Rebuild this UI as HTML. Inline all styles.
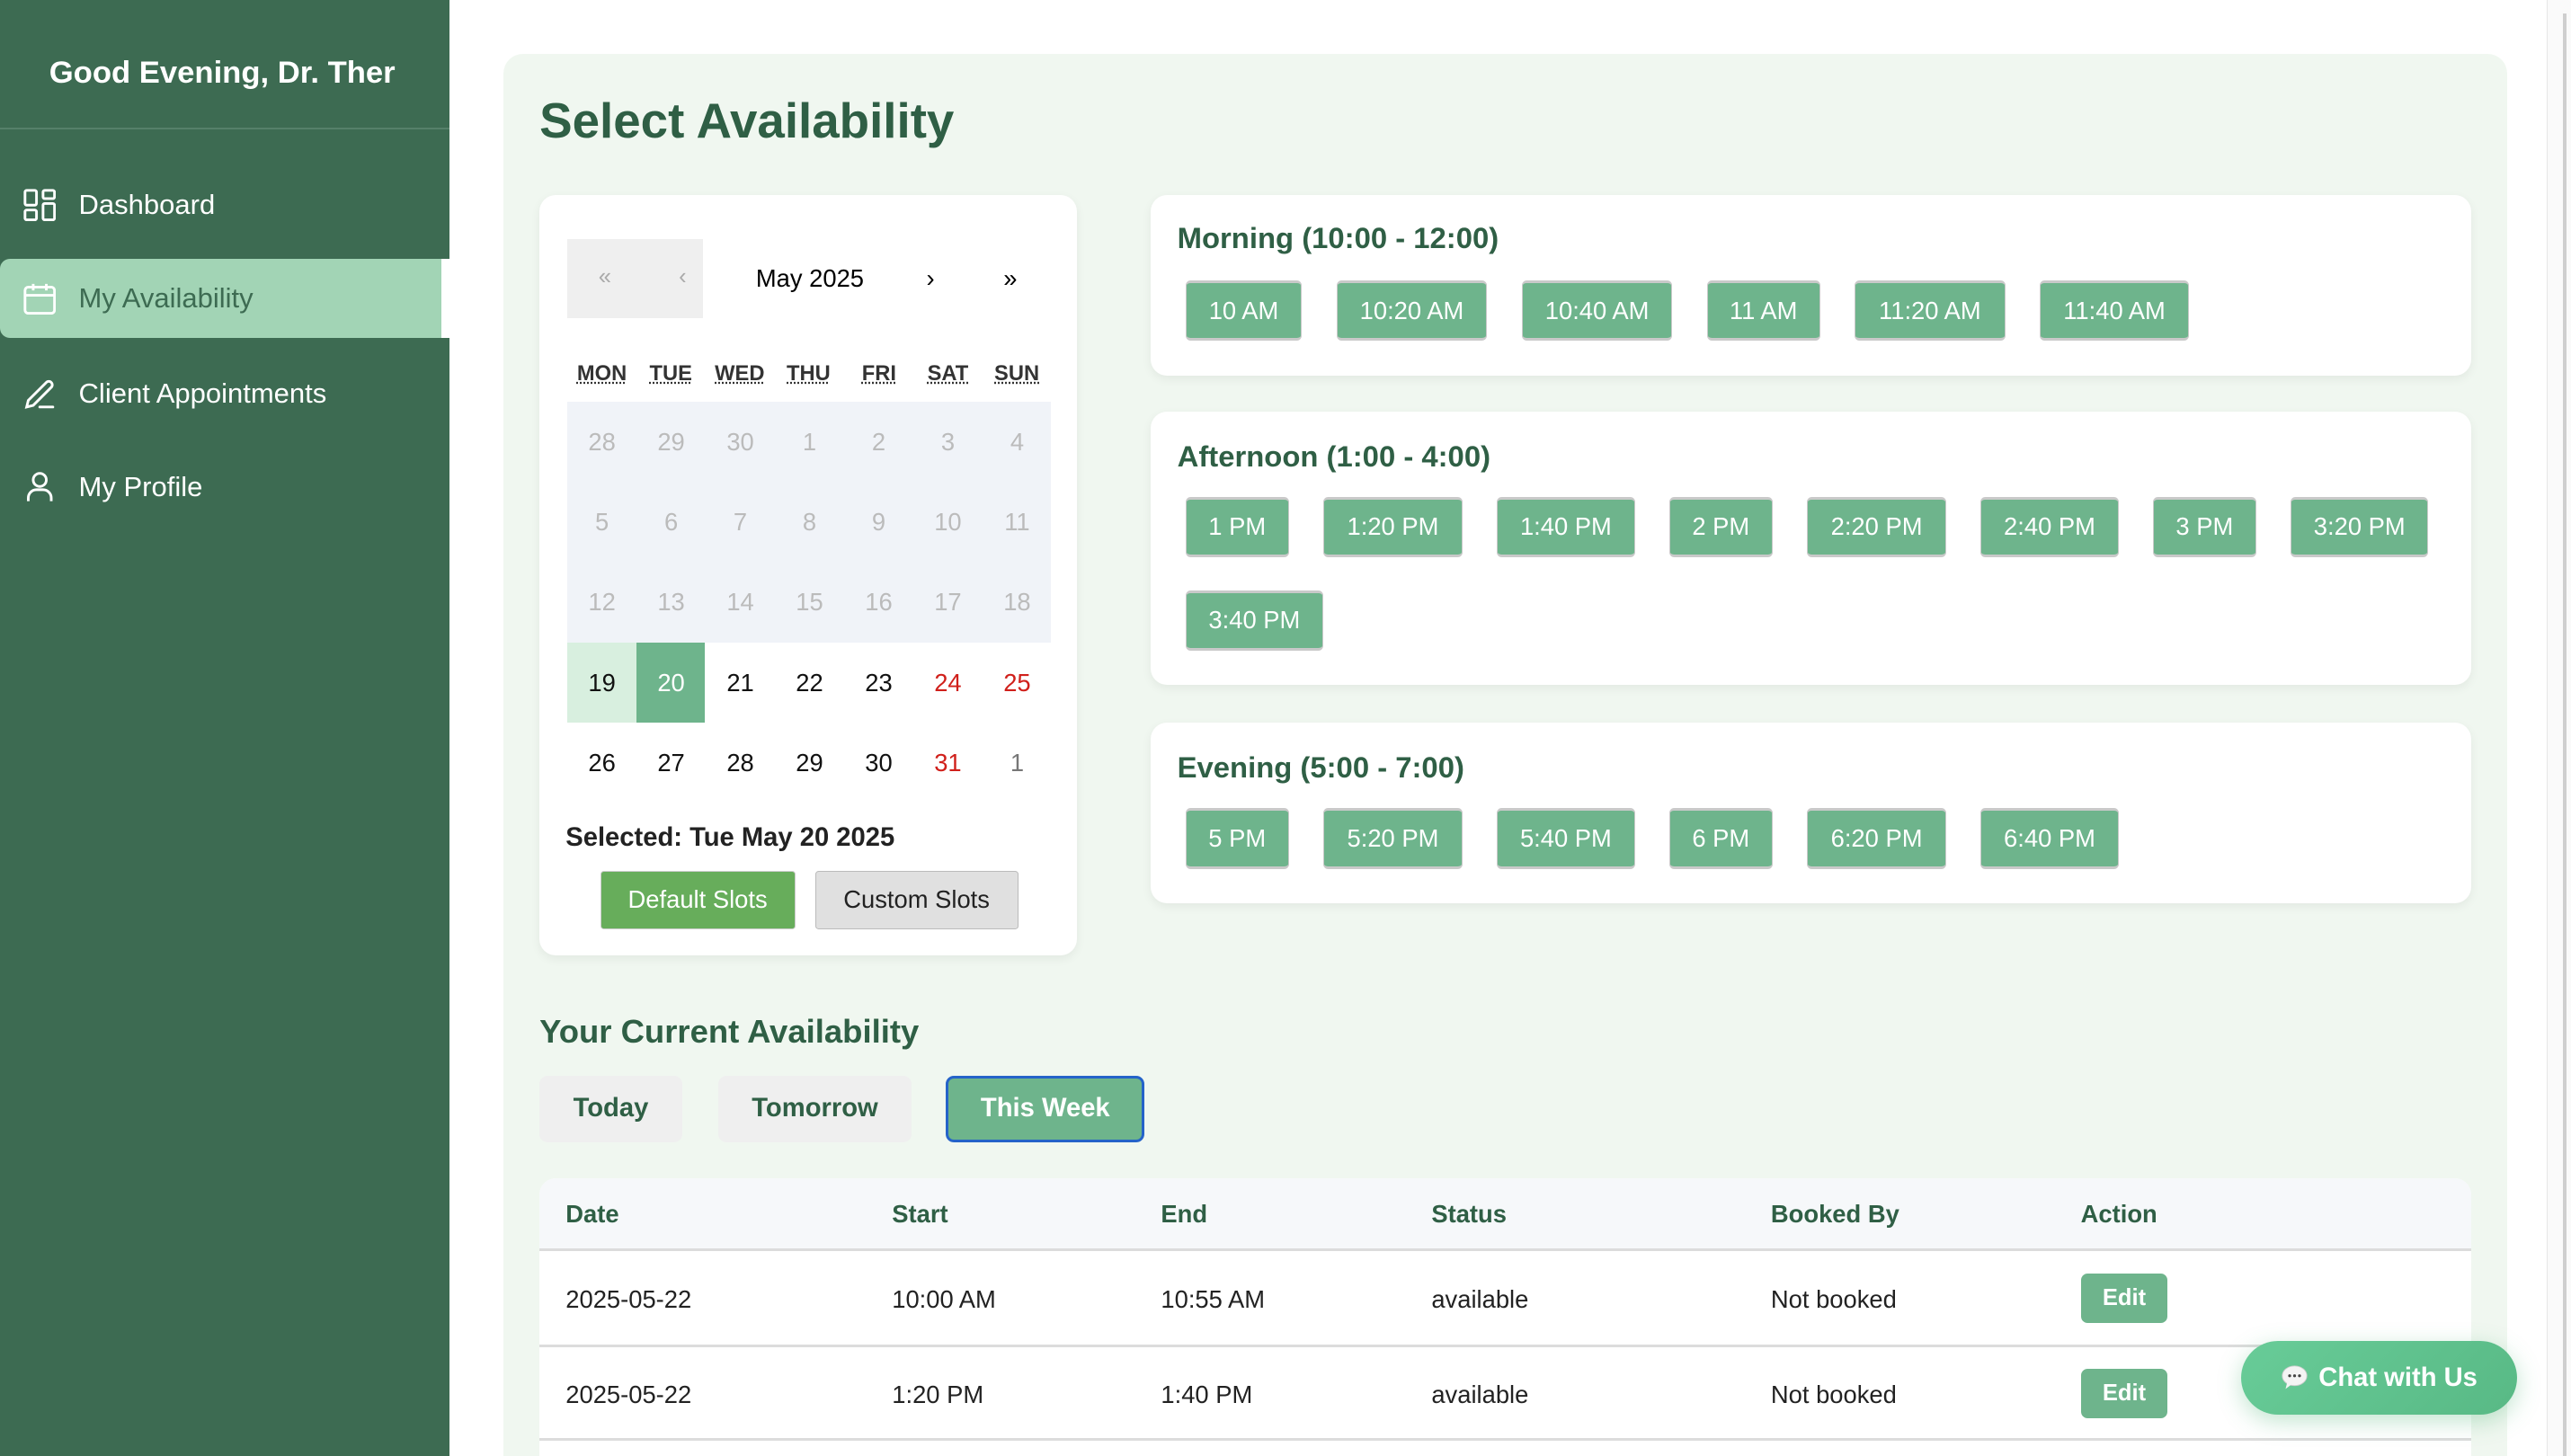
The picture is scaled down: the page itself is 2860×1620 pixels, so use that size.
<!DOCTYPE html>
<html><head><meta charset="utf-8"><style>
*{box-sizing:border-box;margin:0;padding:0}
html,body{width:2860px;height:1620px;overflow:hidden;background:#fff}
#root{zoom:1.8240;width:1568px;height:888px;max-height:888px;position:relative;font-family:"Liberation Sans",Arial,sans-serif;overflow:hidden}
.abs{position:absolute}
.side{left:0;top:0;width:274px;height:888px;background:#3d6b52;color:#fff}
.nav{position:absolute;left:0;width:269px;height:48px;display:flex;align-items:center;font-size:17px}
.nav svg{position:absolute;left:14px}
.nav span{position:absolute;left:48px}
.main{left:307px;top:33px;width:1222px;height:855px;background:#f0f7f0;border-radius:12px 12px 0 0}
.card{background:#fff;border-radius:10px;box-shadow:0 2px 6px rgba(0,0,0,.06)}
h2.t{position:absolute;font-size:18px;font-weight:bold;color:#2f5f45}
.slot{position:absolute;height:37px;background:#6eb48c;color:#fff;font-size:15px;display:flex;align-items:center;justify-content:center;border-radius:3px;border:1px solid #c9c9c9;border-top-width:2px;border-bottom-width:2px}
.cell{position:absolute;width:42.2px;height:49px;display:flex;align-items:center;justify-content:center;font-size:15px}
.wd{position:absolute;top:221px;font-size:13px;font-weight:bold;color:#333;text-decoration:underline dotted;width:42.2px;text-align:center}
.th{position:absolute;font-size:15px;font-weight:bold;color:#2f5f45}
.td{position:absolute;font-size:15px;color:#222}
.edit{position:absolute;left:1269px;width:53px;height:30px;background:#6eb48c;color:#fff;font-weight:bold;font-size:14px;border-radius:4px;display:flex;align-items:center;justify-content:center}
</style></head><body><div id="root">
<div class="abs side">
 <div class="abs" style="left:30px;top:34px;font-size:19px;font-weight:bold">Good Evening, Dr. Ther</div>
 <div class="abs" style="left:0;top:78px;width:274px;height:1px;background:#56806a"></div>
 <div class="nav" style="top:101px"><svg width="20" height="20" viewBox="0 0 20 20" fill="none" stroke="#fff" stroke-width="1.6"><rect x="1" y="1" width="7" height="9" rx="1"/><rect x="12" y="1" width="7" height="5" rx="1"/><rect x="1" y="13" width="7" height="6" rx="1"/><rect x="12" y="9" width="7" height="10" rx="1"/></svg><span>Dashboard</span></div>
 <div class="nav" style="top:158px;background:#a2d4b5;border-radius:6px 0 0 6px;color:#3d6b52"><svg width="20" height="20" viewBox="0 0 20 20" fill="none" stroke="#fff" stroke-width="1.6"><rect x="1" y="3" width="18" height="16" rx="2"/><path d="M1 8h18M6 1v4M14 1v4"/></svg><span>My Availability</span></div>
 <div class="abs" style="left:269px;top:158px;width:5px;height:48px;background:#fff"></div>
 <div class="nav" style="top:216px"><svg width="20" height="20" viewBox="0 0 20 20" fill="none" stroke="#fff" stroke-width="1.6" stroke-linecap="round"><path d="M2 18l1-4L14 3a2 2 0 013 3L6 17z"/><path d="M10 18h8"/></svg><span>Client Appointments</span></div>
 <div class="nav" style="top:273px"><svg width="20" height="20" viewBox="0 0 20 20" fill="none" stroke="#fff" stroke-width="1.6"><circle cx="10" cy="6" r="4"/><path d="M3 19v-2a5 5 0 015-5h4a5 5 0 015 5v2"/></svg><span>My Profile</span></div>
</div>
<div class="abs" style="left:1553px;top:0;width:15px;height:888px;background:#fafafa;border-left:1px solid #e6e6e6"></div>
<div class="abs" style="left:1563px;top:8px;width:2px;height:880px;background:#cfcfcf"></div>
<div class="abs main"></div>
<div class="abs" style="left:329px;top:56px;font-size:30px;font-weight:bold;color:#2f5f45">Select Availability</div>

<div class="abs card" style="left:329px;top:119px;width:328px;height:464px"></div>
<div class="abs" style="left:346px;top:146px;width:83px;height:48px;background:#efefef"></div>
<div class="abs" style="left:365px;top:161px;color:#aaa;font-size:14px">«</div>
<div class="abs" style="left:414px;top:161px;color:#aaa;font-size:14px">‹</div>
<div class="abs" style="left:461px;top:161px;font-size:15px;color:#000">May 2025</div>
<div class="abs" style="left:565px;top:161px;font-size:15px">›</div>
<div class="abs" style="left:612px;top:161px;font-size:15px">»</div>
<div class="wd" style="left:346px">MON</div><div class="wd" style="left:388px">TUE</div><div class="wd" style="left:430px">WED</div><div class="wd" style="left:472px">THU</div><div class="wd" style="left:515px">FRI</div><div class="wd" style="left:557px">SAT</div><div class="wd" style="left:599px">SUN</div>
<div class="abs" style="left:346px;top:245px;width:295px;height:147px;background:#f0f3f8"></div>
<div class="abs" style="left:346px;top:392px;width:42px;height:49px;background:#d8efdf"></div>
<div class="abs" style="left:388px;top:392px;width:42px;height:49px;background:#6eb48c"></div>
<div id="cal"></div>
<div class="abs" style="left:345px;top:502px;font-size:16px;font-weight:bold;color:#222">Selected: Tue May 20 2025</div>
<div class="abs" style="left:366px;top:531px;width:119px;height:36px;background:#67ad5b;border:1px solid #ccc;border-radius:2px;color:#fff;font-size:15px;display:flex;align-items:center;justify-content:center">Default Slots</div>
<div class="abs" style="left:497px;top:531px;width:124px;height:36px;background:#e0e0e0;border:1px solid #bbb;border-radius:2px;color:#222;font-size:15px;display:flex;align-items:center;justify-content:center">Custom Slots</div>

<div class="abs card" style="left:702px;top:119px;width:805px;height:110px"></div>
<h2 class="t" style="left:718px;top:135px">Morning (10:00 - 12:00)</h2>
<div class="abs card" style="left:702px;top:251px;width:805px;height:167px"></div>
<h2 class="t" style="left:718px;top:268px">Afternoon (1:00 - 4:00)</h2>
<div class="abs card" style="left:702px;top:441px;width:805px;height:110px"></div>
<h2 class="t" style="left:718px;top:458px">Evening (5:00 - 7:00)</h2>
<div id="slots"></div>

<div class="abs" style="left:329px;top:618px;font-size:20px;font-weight:bold;color:#2f5f45">Your Current Availability</div>
<div class="abs" style="left:329px;top:656px;width:87px;height:41px;background:#efefef;border-radius:5px;font-size:16px;font-weight:bold;color:#2f5f45;display:flex;align-items:center;justify-content:center">Today</div>
<div class="abs" style="left:438px;top:656px;width:118px;height:41px;background:#efefef;border-radius:5px;font-size:16px;font-weight:bold;color:#2f5f45;display:flex;align-items:center;justify-content:center">Tomorrow</div>
<div class="abs" style="left:577px;top:656px;width:121px;height:41px;background:#6eb48c;border:2px solid #2563c9;border-radius:5px;font-size:16px;font-weight:bold;color:#fff;display:flex;align-items:center;justify-content:center">This Week</div>

<div class="abs" style="left:329px;top:719px;width:1178px;height:169px;background:#fff;border-radius:10px 10px 0 0"></div>
<div class="abs" style="left:329px;top:719px;width:1178px;height:44px;background:#f6f8fa;border-radius:10px 10px 0 0;border-bottom:2px solid #dcdcdc"></div>
<div class="abs" style="left:329px;top:820px;width:1178px;height:2px;background:#dcdcdc"></div>
<div class="abs" style="left:329px;top:877px;width:1178px;height:2px;background:#dcdcdc"></div>
<div class="th" style="left:345px;top:732px">Date</div><div class="th" style="left:544px;top:732px">Start</div><div class="th" style="left:708px;top:732px">End</div><div class="th" style="left:873px;top:732px">Status</div><div class="th" style="left:1080px;top:732px">Booked By</div><div class="th" style="left:1269px;top:732px">Action</div>
<div class="td" style="left:345px;top:784px">2025-05-22</div><div class="td" style="left:544px;top:784px">10:00 AM</div><div class="td" style="left:708px;top:784px">10:55 AM</div><div class="td" style="left:873px;top:784px">available</div><div class="td" style="left:1080px;top:784px">Not booked</div><div class="edit" style="top:777px">Edit</div>
<div class="td" style="left:345px;top:842px">2025-05-22</div><div class="td" style="left:544px;top:842px">1:20 PM</div><div class="td" style="left:708px;top:842px">1:40 PM</div><div class="td" style="left:873px;top:842px">available</div><div class="td" style="left:1080px;top:842px">Not booked</div><div class="edit" style="top:835px">Edit</div>

<div class="abs" style="left:1367px;top:818px;width:168px;height:45px;border-radius:23px;background:linear-gradient(135deg,#68cc98,#58b985);box-shadow:0 4px 14px rgba(80,180,120,.35);color:#fff;font-weight:bold;font-size:16px;display:flex;align-items:center;justify-content:center;gap:6px"><svg width="17" height="16" viewBox="0 0 17 16"><ellipse cx="8.5" cy="7" rx="7.5" ry="6" fill="#f4f4f4" stroke="#ccc" stroke-width=".5"/><path d="M4 11l-1 4 4-3z" fill="#f4f4f4"/><circle cx="5.5" cy="7" r=".9" fill="#444"/><circle cx="8.5" cy="7" r=".9" fill="#444"/><circle cx="11.5" cy="7" r=".9" fill="#444"/></svg>Chat with Us</div>
</div>
<script>
var c='',rows=[[28,29,30,1,2,3,4],[5,6,7,8,9,10,11],[12,13,14,15,16,17,18],[19,20,21,22,23,24,25],[26,27,28,29,30,31,1]];
rows.forEach(function(r,i){r.forEach(function(d,j){var col=i<3?'#bbb':(j>=5&&!(i==4&&j==6)?'#d0201b':'#111');if(i==3&&j==1)col='#fff';if(i==4&&j==6)col='#777';
c+='<div class="cell" style="left:'+(346+j*42.2)+'px;top:'+(245+i*49)+'px;color:'+col+'">'+d+'</div>';});});
document.getElementById('cal').outerHTML=c;
var s='',m=[[723,794,'10 AM'],[815,907,'10:20 AM'],[928,1020,'10:40 AM'],[1041,1110,'11 AM'],[1131,1223,'11:20 AM'],[1244,1335,'11:40 AM']];
var a=[[723,786,'1 PM'],[807,892,'1:20 PM'],[913,997,'1:40 PM'],[1018,1081,'2 PM'],[1102,1187,'2:20 PM'],[1208,1292,'2:40 PM'],[1313,1376,'3 PM'],[1397,1481,'3:20 PM']];
var e=[[723,786,'5 PM'],[807,892,'5:20 PM'],[913,997,'5:40 PM'],[1018,1081,'6 PM'],[1102,1187,'6:20 PM'],[1208,1292,'6:40 PM']];
function add(L,t){L.forEach(function(b){s+='<div class="slot" style="left:'+b[0]+'px;top:'+t+'px;width:'+(b[1]-b[0])+'px">'+b[2]+'</div>';});}
add(m,171);add(a,303);add([[723,807,'3:40 PM']],360);add(e,493);
document.getElementById('slots').outerHTML=s;
</script>
</body></html>
